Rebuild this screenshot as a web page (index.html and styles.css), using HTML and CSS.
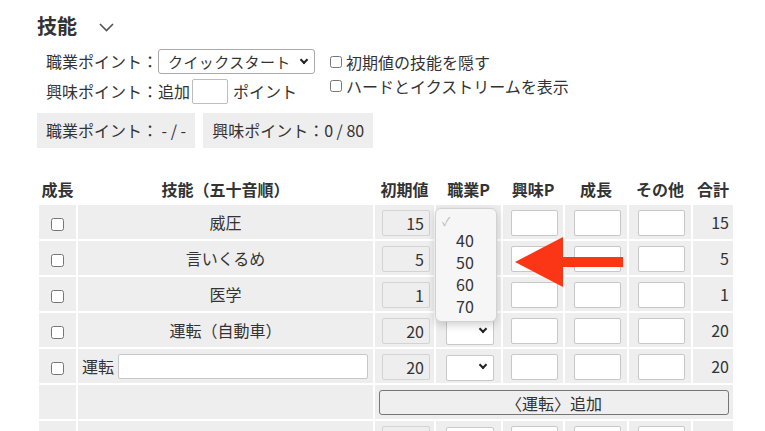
FILE: index.html
```html
<!DOCTYPE html>
<html lang="ja">
<head>
    <meta charset="UTF-8">
    <meta name="viewport" content="width=device-width, initial-scale=1.0">
    <title>技能</title>
    <link rel="stylesheet" href="styles.css">
</head>
<body>

    <div class="page">
        <h2 class="section-title">技能
            <svg class="toggle" width="15" height="9" viewBox="0 0 15 9"><polyline points="1,1 7.5,7.5 14,1" /></svg>
        </h2>

        <div class="settings">
            <div class="point-form">
                <div class="form-line">
                    <span>職業ポイント：</span>
                    <span class="select-wrap">
                        <select class="job-select">
                            <option>クイックスタート</option>
                        </select>
                    </span>
                </div>
                <div class="form-line">
                    <span>興味ポイント：追加</span>
                    <input type="text" class="extra-input">
                    <span>ポイント</span>
                </div>
            </div>

            <div class="options">
                <label class="option"><input type="checkbox">初期値の技能を隠す</label>
                <label class="option"><input type="checkbox">ハードとイクストリームを表示</label>
            </div>
        </div>

        <div class="point-stats">
            <div class="stat">職業ポイント： - / -</div>
            <div class="stat">興味ポイント：0 / 80</div>
        </div>

        <div class="skill-area">
            <table class="skill-table">
                <colgroup>
                    <col style="width: 37px">
                    <col style="width: 295px">
                    <col style="width: 59px">
                    <col style="width: 65px">
                    <col style="width: 60px">
                    <col style="width: 62px">
                    <col style="width: 62px">
                    <col style="width: 40px">
                </colgroup>
                <thead>
                    <tr>
                        <th>成長</th>
                        <th>技能（五十音順）</th>
                        <th>初期値</th>
                        <th>職業P</th>
                        <th>興味P</th>
                        <th>成長</th>
                        <th>その他</th>
                        <th>合計</th>
                    </tr>
                </thead>
                <tbody>
                    <tr>
                        <td class="check-cell"><input type="checkbox"></td>
                        <td class="name-cell">威圧</td>
                        <td class="input-cell"><input type="text" class="base-input" value="15" readonly></td>
                        <td class="input-cell"><span class="small-select"><select><option></option></select></span></td>
                        <td class="input-cell"><input type="text" class="num-input"></td>
                        <td class="input-cell"><input type="text" class="num-input"></td>
                        <td class="input-cell"><input type="text" class="num-input"></td>
                        <td class="total-cell">15</td>
                    </tr>
                    <tr>
                        <td class="check-cell"><input type="checkbox"></td>
                        <td class="name-cell">言いくるめ</td>
                        <td class="input-cell"><input type="text" class="base-input" value="5" readonly></td>
                        <td class="input-cell"><span class="small-select"><select><option></option></select></span></td>
                        <td class="input-cell"><input type="text" class="num-input"></td>
                        <td class="input-cell"><input type="text" class="num-input"></td>
                        <td class="input-cell"><input type="text" class="num-input"></td>
                        <td class="total-cell">5</td>
                    </tr>
                    <tr>
                        <td class="check-cell"><input type="checkbox"></td>
                        <td class="name-cell">医学</td>
                        <td class="input-cell"><input type="text" class="base-input" value="1" readonly></td>
                        <td class="input-cell"><span class="small-select"><select><option></option></select></span></td>
                        <td class="input-cell"><input type="text" class="num-input"></td>
                        <td class="input-cell"><input type="text" class="num-input"></td>
                        <td class="input-cell"><input type="text" class="num-input"></td>
                        <td class="total-cell">1</td>
                    </tr>
                    <tr>
                        <td class="check-cell"><input type="checkbox"></td>
                        <td class="name-cell">運転（自動車）</td>
                        <td class="input-cell"><input type="text" class="base-input" value="20" readonly></td>
                        <td class="input-cell"><span class="small-select"><select><option></option></select></span></td>
                        <td class="input-cell"><input type="text" class="num-input"></td>
                        <td class="input-cell"><input type="text" class="num-input"></td>
                        <td class="input-cell"><input type="text" class="num-input"></td>
                        <td class="total-cell">20</td>
                    </tr>
                    <tr>
                        <td class="check-cell"><input type="checkbox"></td>
                        <td class="name-cell custom-name">
                            <div class="custom-wrap"><span>運転</span><input type="text" class="name-input"></div>
                        </td>
                        <td class="input-cell"><input type="text" class="base-input" value="20" readonly></td>
                        <td class="input-cell"><span class="small-select"><select><option></option></select></span></td>
                        <td class="input-cell"><input type="text" class="num-input"></td>
                        <td class="input-cell"><input type="text" class="num-input"></td>
                        <td class="input-cell"><input type="text" class="num-input"></td>
                        <td class="total-cell">20</td>
                    </tr>
                    <tr>
                        <td></td>
                        <td></td>
                        <td colspan="6" class="button-cell"><button class="add-btn">〈運転〉追加</button></td>
                    </tr>
                    <tr>
                        <td class="check-cell"><input type="checkbox"></td>
                        <td class="name-cell">応急手当</td>
                        <td class="input-cell"><input type="text" class="base-input" value="30" readonly></td>
                        <td class="input-cell"><span class="small-select"><select><option></option></select></span></td>
                        <td class="input-cell"><input type="text" class="num-input"></td>
                        <td class="input-cell"><input type="text" class="num-input"></td>
                        <td class="input-cell"><input type="text" class="num-input"></td>
                        <td class="total-cell">30</td>
                    </tr>
                </tbody>
            </table>

            <!-- open list of the 職業P select in the first row -->
            <div class="select-popup">
                <div class="popup-check">✓</div>
                <div class="popup-item">40</div>
                <div class="popup-item">50</div>
                <div class="popup-item">60</div>
                <div class="popup-item">70</div>
            </div>

            <svg class="pointer-arrow" width="114" height="52" viewBox="0 0 114 52">
                <polygon points="3,26 51,1 51,21 111,21 111,31 51,31 51,51" />
            </svg>
        </div>
    </div>

</body>
</html>
```

FILE: styles.css
```css
html, body {
    overflow: hidden;
}

body {
    margin: 0;
    background-color: #ffffff;
    color: #333;
    font-family: "Noto Sans CJK JP", "Noto Sans", sans-serif;
    font-size: 16px;
}

.page {
    padding: 12px 0 0 37px;
}

.section-title {
    margin: 0;
    font-size: 20px;
    line-height: 28px;
    font-weight: bold;
    color: #333;
    display: flex;
    align-items: center;
}

.section-title .toggle {
    margin-left: 22px;
    margin-top: 2px;
    fill: none;
    stroke: #555;
    stroke-width: 1.6;
}

.settings {
    display: flex;
    margin-top: 6px;
    padding-left: 9px;
}

.form-line {
    display: flex;
    align-items: center;
    height: 30px;
}

.select-wrap {
    position: relative;
    display: inline-block;
    height: 25px;
}

.select-wrap::after {
    content: "";
    position: absolute;
    right: 8px;
    top: 8px;
    width: 4px;
    height: 4px;
    border-right: 2px solid #222;
    border-bottom: 2px solid #222;
    transform: rotate(45deg);
    pointer-events: none;
}

.job-select {
    appearance: none;
    width: 157px;
    height: 25px;
    padding: 0 20px 0 9px;
    border: 1px solid #a9a9a9;
    border-radius: 3px;
    background-color: #fff;
    font-family: inherit;
    font-size: 15px;
    color: #333;
    letter-spacing: 0.4px;
}

.extra-input {
    width: 36px;
    height: 25px;
    box-sizing: border-box;
    margin: 0 5px 0 2px;
    border: 1px solid #bdbdbd;
    border-radius: 2px;
}

.options {
    margin-left: 15px;
    padding-top: 4px;
}

.option {
    display: flex;
    align-items: center;
    height: 24px;
}

.option input {
    width: 12px;
    height: 12px;
    margin: 0 4px 0 0;
}

.point-stats {
    display: flex;
    gap: 8px;
    margin-top: 7px;
}

.stat {
    background-color: #eeeeee;
    height: 35px;
    line-height: 35px;
    padding: 0 9px;
}

.skill-area {
    position: relative;
    margin-top: 29px;
}

.skill-table {
    table-layout: fixed;
    width: 698px;
    border-collapse: separate;
    border-spacing: 2px;
}

.skill-table th {
    height: 24px;
    padding: 0;
    font-weight: bold;
    text-align: center;
    white-space: nowrap;
    vertical-align: top;
    line-height: 21px;
}

.skill-table td {
    height: 34px;
    padding: 0;
    background-color: #eeeeee;
    text-align: center;
    white-space: nowrap;
}

.check-cell input {
    width: 13px;
    height: 13px;
    margin: 0;
    vertical-align: middle;
}

.custom-name {
    text-align: left;
}

.custom-wrap {
    display: flex;
    align-items: center;
    gap: 4px;
    padding-left: 4px;
}

.name-input {
    width: 250px;
    height: 25px;
    box-sizing: border-box;
    border: 1px solid #c8c8c8;
    border-radius: 2px;
    background-color: #fff;
}

.input-cell {
    padding-left: 3px !important;
}

.base-input,
.num-input {
    width: 47px;
    height: 26px;
    box-sizing: border-box;
    margin: 0;
    border-radius: 2px;
    font-family: inherit;
    font-size: 16px;
    color: #333;
    vertical-align: middle;
}

.base-input {
    width: 48px;
    background-color: #eeeeee;
    border: 1px solid #d3d3d3;
    text-align: right;
    padding: 0 5px 0 0;
}

.num-input {
    background-color: #fff;
    border: 1px solid #c8c8c8;
}

.small-select {
    position: relative;
    display: inline-block;
    vertical-align: middle;
    height: 26px;
}

.small-select::after {
    content: "";
    position: absolute;
    right: 8px;
    top: 8px;
    width: 4px;
    height: 4px;
    border-right: 2px solid #222;
    border-bottom: 2px solid #222;
    transform: rotate(45deg);
    pointer-events: none;
}

.small-select select {
    appearance: none;
    width: 48px;
    height: 26px;
    border: 1px solid #c8c8c8;
    border-radius: 2px;
    background-color: #fff;
}

.total-cell {
    text-align: right !important;
    padding-right: 4px !important;
}

.button-cell {
    padding: 0 4px !important;
}

.add-btn {
    width: 100%;
    height: 25px;
    background-color: #efefef;
    border: 1px solid #767676;
    border-radius: 3px;
    font-family: inherit;
    font-size: 16px;
    color: #333;
    padding: 0;
}

.select-popup {
    position: absolute;
    z-index: 2;
    left: 398px;
    top: 31px;
    width: 62px;
    height: 114px;
    box-sizing: border-box;
    padding: 4px 0 0 0;
    background-color: #f6f6f6;
    border: 1px solid #d2d2d2;
    border-radius: 6px;
    box-shadow: 0 3px 8px rgba(0, 0, 0, 0.18);
}

.popup-check {
    height: 16px;
    line-height: 16px;
    padding-left: 6px;
    font-size: 12px;
    color: #bbb;
}

.popup-item {
    height: 22px;
    line-height: 22px;
    padding-left: 20px;
    font-size: 16px;
    color: #333;
}

.pointer-arrow {
    position: absolute;
    z-index: 3;
    left: 475px;
    top: 59px;
    fill: #fb3617;
}
```
